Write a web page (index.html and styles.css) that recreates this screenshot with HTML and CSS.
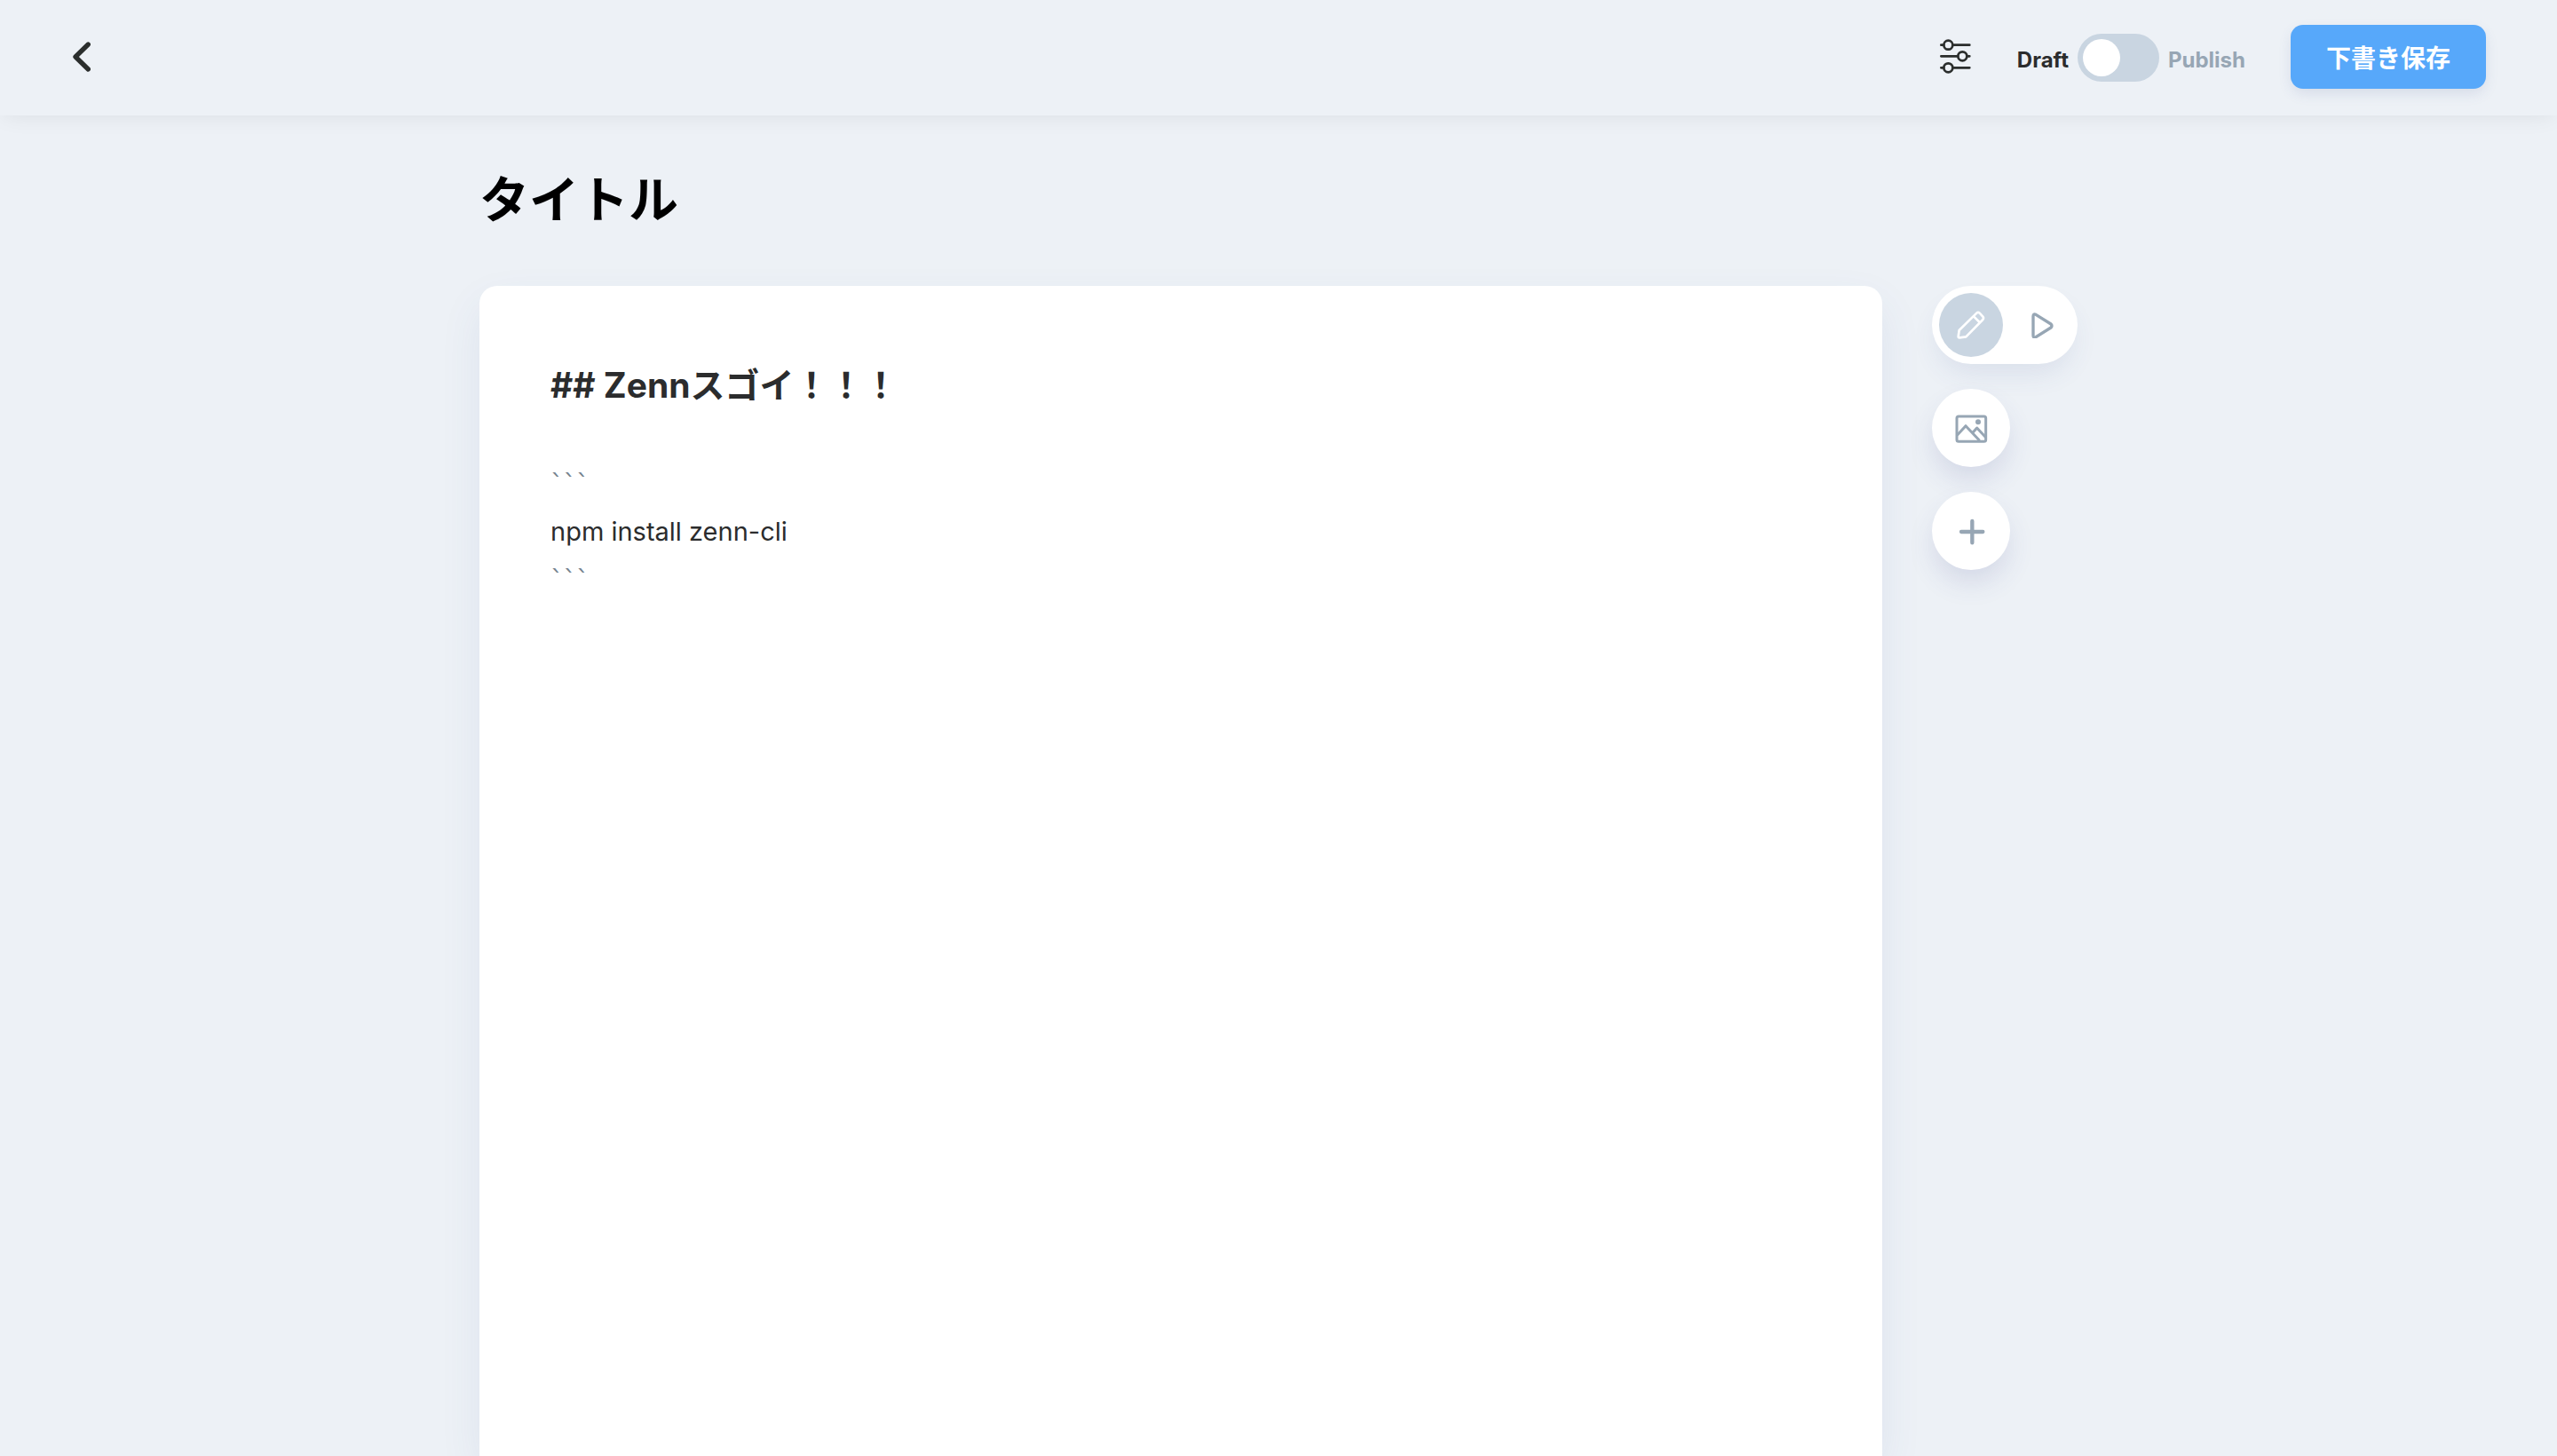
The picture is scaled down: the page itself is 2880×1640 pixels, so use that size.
FILE: index.html
```
<!DOCTYPE html>
<html lang="ja">
<head>
    <meta charset="UTF-8">
    <meta name="viewport" content="width=device-width, initial-scale=1.0">
    <title>タイトル</title>
    <link rel="stylesheet" href="styles.css">
</head>
<body>
    <header class="header">
        <a class="back" href="#" aria-label="戻る">
            <svg width="20" height="34" viewBox="0 0 60 102">
                <path d="M52 9 L9 51 L52 93" fill="none" stroke="currentColor" stroke-width="16" stroke-linecap="round" stroke-linejoin="round"/>
            </svg>
        </a>
        <div class="header-actions">
            <button class="icon-btn" type="button" aria-label="設定">
                <svg width="36" height="40" viewBox="0 0 108 120" fill="none" stroke="currentColor" stroke-width="8" stroke-linecap="round">
                    <path d="M4 20H13M44 20H100M4 58H61M92 58H100M4 97H13M44 97H100"/>
                    <circle cx="28" cy="20" r="15"/>
                    <circle cx="76" cy="58" r="15"/>
                    <circle cx="28" cy="97" r="15"/>
                </svg>
            </button>
            <label class="status" for="publish">
                <span>Draft</span>
                <input class="toggle" type="checkbox" id="publish">
                <span class="status-off">Publish</span>
            </label>
            <button class="save-btn" type="button">下書き保存</button>
        </div>
    </header>

    <main class="container">
        <input class="title" type="text" value="タイトル" aria-label="タイトル">
        <div class="columns">
            <div class="editor" contenteditable="true" role="textbox" aria-multiline="true" aria-label="本文" spellcheck="false">
                <div class="line line-heading">## Zennスゴイ！！！</div>
                <div class="line"><br></div>
                <div class="line line-mark">```</div>
                <div class="line">npm install zenn-cli</div>
                <div class="line line-mark">```</div>
            </div>

            <aside class="tools">
                <div class="mode">
                    <button class="mode-btn active" type="button" aria-label="編集">
                        <svg width="32" height="32" viewBox="0 0 96 96" fill="none" stroke="currentColor" stroke-width="8" stroke-linecap="round" stroke-linejoin="round">
                            <path d="M8 66 L67 8 Q72 3 77 8 L88 20 Q92 25 88 30 L31 88 L9 91 Q5 91 5 87 Z"/>
                            <path d="M57 19 L77 39"/>
                        </svg>
                    </button>
                    <button class="mode-btn" type="button" aria-label="プレビュー">
                        <svg width="34" height="30" viewBox="0 0 102 90" fill="none" stroke="currentColor" stroke-width="10" stroke-linejoin="round">
                            <path d="M33 16 Q33 6 42 10 L93 42 Q99 48 93 54 L42 86 Q33 90 33 80 Z"/>
                        </svg>
                    </button>
                </div>
                <button class="round-btn" type="button" aria-label="画像を挿入">
                    <svg width="38" height="34" viewBox="0 0 114 102" fill="none" stroke="currentColor" stroke-width="9" stroke-linejoin="round">
                        <rect x="9" y="12" width="98" height="85" rx="6"/>
                        <path d="M10 76 L39 44 L86 94M63 67 L77 51 L107 83"/>
                        <circle cx="81" cy="31" r="9" fill="currentColor" stroke="none"/>
                    </svg>
                </button>
                <button class="round-btn" type="button" aria-label="追加">
                    <svg width="32" height="32" viewBox="0 0 96 96" fill="none" stroke="currentColor" stroke-width="13" stroke-linecap="round">
                        <path d="M52 15V88M15 51H88"/>
                    </svg>
                </button>
            </aside>
        </div>
    </main>
</body>
</html>
```

FILE: styles.css
```
* {
    box-sizing: border-box;
}
body {
    min-height: 100vh;
    margin: 0;
    display: flex;
    flex-direction: column;
    font-family: Inter, "Noto Sans CJK JP", sans-serif;
    color: #2b2c2d;
    background: #edf1f6;
}
button {
    padding: 0;
    border: 0;
    background: none;
    color: inherit;
    font: inherit;
    cursor: pointer;
}
svg {
    display: block;
}

/* header */
.header {
    display: flex;
    align-items: center;
    justify-content: space-between;
    height: 130px;
    padding: 0 80px 2px;
    box-shadow: 0 4px 24px -4px rgba(0, 0, 0, 0.08);
}
.back {
    padding: 0 2px;
    color: #2b2e2d;
}
.header-actions {
    display: flex;
    align-items: center;
    gap: 51px;
}
.icon-btn {
    color: #2b2e2d;
}
.status {
    display: flex;
    align-items: center;
    gap: 10px;
    padding-top: 2px;
    font-size: 24px;
    font-weight: 700;
    line-height: 28px;
}
.status span {
    padding-top: 6px;
}
.status-off {
    color: #97a6b4;
}
.toggle {
    appearance: none;
    width: 92px;
    height: 54px;
    margin: 0;
    padding: 6px;
    border-radius: 27px;
    background: #c9d5e1;
    cursor: pointer;
}
.toggle::before {
    content: "";
    display: block;
    width: 42px;
    height: 42px;
    border-radius: 50%;
    background: #fff;
}
.toggle:checked::before {
    margin-left: auto;
}
.save-btn {
    height: 72px;
    padding: 0 40px;
    border-radius: 14px;
    background: #57a8fa;
    color: #fff;
    font-size: 28px;
    font-weight: 700;
    box-shadow: 0 6px 16px -2px rgba(60, 80, 150, 0.15);
}

/* editor */
.container {
    display: flex;
    flex-direction: column;
    flex: 1;
    width: 100%;
    max-width: 1800px;
    margin: 0 auto;
}
.title {
    width: 100%;
    height: 80px;
    margin: 50px 0 62px;
    padding: 0;
    border: 0;
    outline: 0;
    background: none;
    color: #000;
    font-family: inherit;
    font-size: 56px;
    font-weight: 700;
}
.columns {
    display: flex;
    flex: 1;
    gap: 56px;
}
.editor {
    flex: 1;
    min-width: 0;
    padding: 82px 80px;
    border-radius: 20px 20px 0 0;
    outline: 0;
    background: #fff;
    box-shadow: 0 20px 50px -4px rgba(60, 90, 160, 0.1);
    font-size: 29px;
    line-height: 54px;
}
.line-heading {
    font-size: 39px;
    font-weight: 700;
    line-height: 60px;
}
.line-mark {
    color: #75838f;
    font-family: "DejaVu Sans", sans-serif;
}

/* side tools */
.tools {
    display: flex;
    flex-direction: column;
    align-items: flex-start;
    gap: 28px;
    color: #97a6b4;
}
.mode {
    display: flex;
    gap: 4px;
    padding: 8px;
    border-radius: 44px;
    background: #fff;
    box-shadow: 0 16px 32px -8px rgba(60, 80, 150, 0.12);
}
.mode-btn,
.round-btn {
    display: flex;
    align-items: center;
    justify-content: center;
    border-radius: 50%;
}
.mode-btn {
    width: 72px;
    height: 72px;
}
.mode-btn.active {
    background: #c9d5e1;
    color: #fff;
}
.round-btn {
    width: 88px;
    height: 88px;
    background: #fff;
    box-shadow: 0 16px 32px -4px rgba(60, 70, 140, 0.16);
}
```
